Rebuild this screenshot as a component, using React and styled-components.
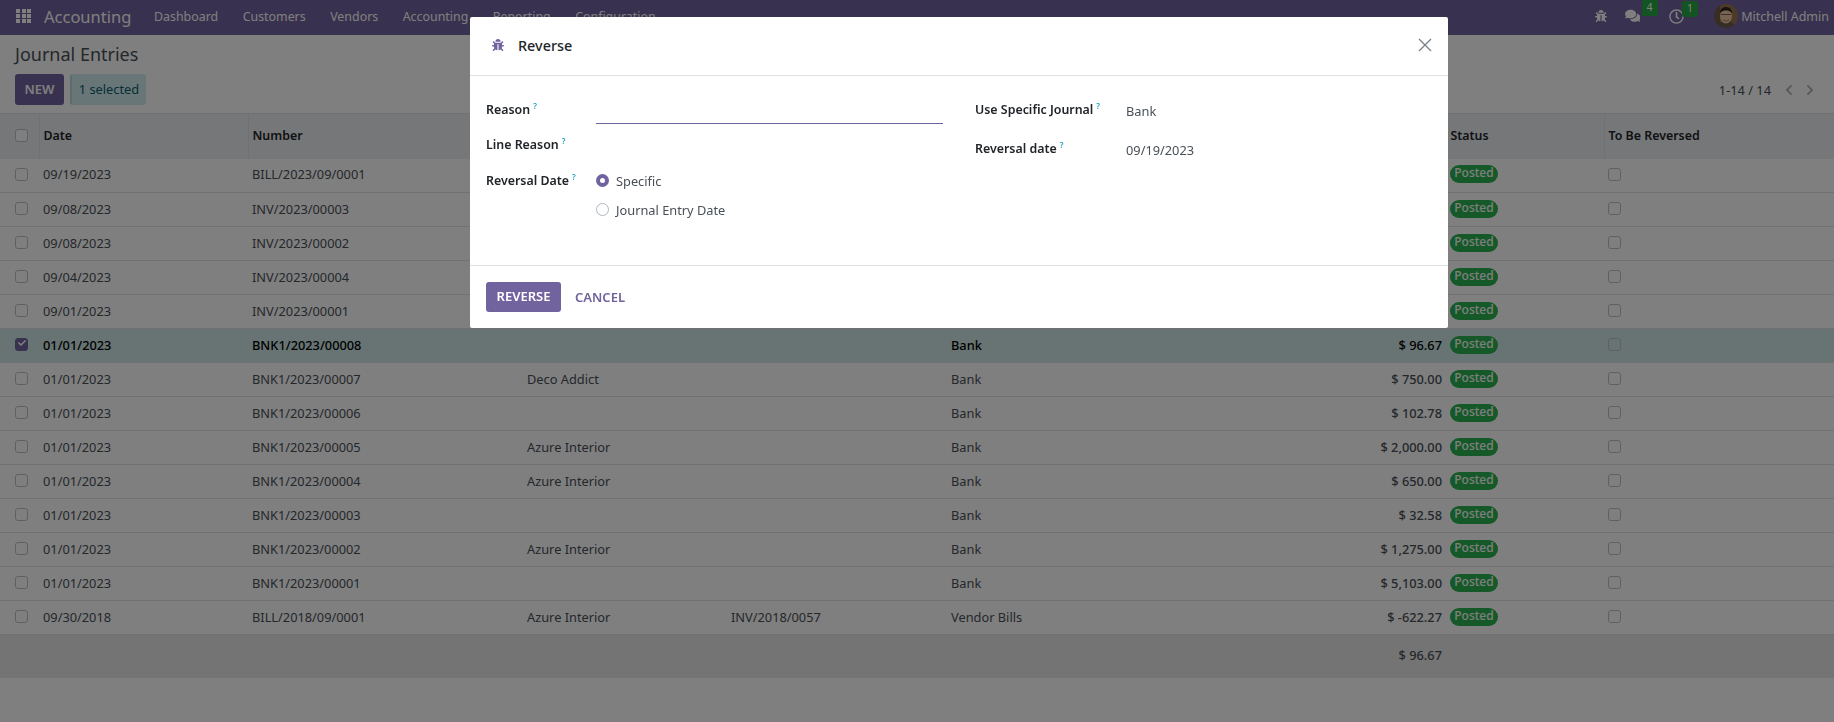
import styled, { createGlobalStyle } from "styled-components";
import { FaBug, FaComments, FaRegClock, FaChevronLeft, FaChevronRight, FaCheck } from "react-icons/fa";

const rows = [
  { date: "09/19/2023", number: "BILL/2023/09/0001", partner: "", ref: "", journal: "Vendor Bills", amount: "$ 1,127.50" },
  { date: "09/08/2023", number: "INV/2023/00003", partner: "", ref: "", journal: "Customer Invoices", amount: "$ 4,610.00" },
  { date: "09/08/2023", number: "INV/2023/00002", partner: "", ref: "", journal: "Customer Invoices", amount: "$ 750.00" },
  { date: "09/04/2023", number: "INV/2023/00004", partner: "", ref: "", journal: "Customer Invoices", amount: "$ 1,740.00" },
  { date: "09/01/2023", number: "INV/2023/00001", partner: "", ref: "", journal: "Customer Invoices", amount: "$ 2,947.50" },
  { date: "01/01/2023", number: "BNK1/2023/00008", partner: "", ref: "", journal: "Bank", amount: "$ 96.67", selected: true },
  { date: "01/01/2023", number: "BNK1/2023/00007", partner: "Deco Addict", ref: "", journal: "Bank", amount: "$ 750.00" },
  { date: "01/01/2023", number: "BNK1/2023/00006", partner: "", ref: "", journal: "Bank", amount: "$ 102.78" },
  { date: "01/01/2023", number: "BNK1/2023/00005", partner: "Azure Interior", ref: "", journal: "Bank", amount: "$ 2,000.00" },
  { date: "01/01/2023", number: "BNK1/2023/00004", partner: "Azure Interior", ref: "", journal: "Bank", amount: "$ 650.00" },
  { date: "01/01/2023", number: "BNK1/2023/00003", partner: "", ref: "", journal: "Bank", amount: "$ 32.58" },
  { date: "01/01/2023", number: "BNK1/2023/00002", partner: "Azure Interior", ref: "", journal: "Bank", amount: "$ 1,275.00" },
  { date: "01/01/2023", number: "BNK1/2023/00001", partner: "", ref: "", journal: "Bank", amount: "$ 5,103.00" },
  { date: "09/30/2018", number: "BILL/2018/09/0001", partner: "Azure Interior", ref: "INV/2018/0057", journal: "Vendor Bills", amount: "$ -622.27" },
];

const navItems = ["Dashboard", "Customers", "Vendors", "Accounting", "Reporting", "Configuration"];

const GlobalStyle = createGlobalStyle`
  html, body {
    margin: 0;
    height: 100%;
    overflow: hidden;
    background: #fff;
  }
  body {
    font-family: "Noto Sans", "Open Sans", sans-serif;
    font-size: 13px;
    color: #495057;
  }
  * {
    box-sizing: border-box;
  }
`;

const Page = styled.div`
  height: 722px;
  display: flex;
  flex-direction: column;
`;

const Navbar = styled.header`
  height: 35px;
  flex: none;
  background: #71639e;
  color: #fff;
  display: flex;
  align-items: center;
  padding: 0 5px 3px 16px;
`;

const AppsGrid = styled.div`
  width: 15px;
  height: 14px;
  display: grid;
  grid-template-columns: repeat(3, 4px);
  grid-template-rows: repeat(3, 4px);
  gap: 1px 1.5px;
  margin-right: 13px;
  span {
    background: #fff;
  }
`;

const Brand = styled.span`
  font-size: 16.5px;
  width: 110px;
`;

const NavItem = styled.span`
  font-size: 12.4px;
  margin-right: 24.5px;
`;

const NavRight = styled.div`
  margin-left: auto;
  display: flex;
  align-items: center;
`;

const NavIcon = styled.span`
  position: relative;
  display: flex;
  margin-left: ${(p) => p.$gap}px;
  font-size: ${(p) => p.$size}px;
`;

const Badge = styled.b`
  position: absolute;
  top: -8px;
  left: ${(p) => p.$left}px;
  width: 16px;
  height: 16px;
  border-radius: 2px;
  background: #28a745;
  color: #fff;
  font-size: 10.5px;
  font-weight: 400;
  line-height: 15px;
  text-align: center;
`;

const UserName = styled.span`
  margin-left: 3px;
  font-size: 12.5px;
`;

const ControlPanel = styled.div`
  flex: none;
  height: 78px;
  border-top: 1px solid transparent;
  padding: 8px 15px 0;
  background: #fff;
`;

const Title = styled.div`
  font-size: 18px;
  line-height: 21px;
  color: #495057;
`;

const ActionRow = styled.div`
  margin-top: 9px;
  display: flex;
  align-items: center;
`;

const NewButton = styled.div`
  width: 49px;
  height: 31px;
  border-radius: 3px;
  background: #71639e;
  color: #fff;
  font-size: 13px;
  font-weight: 600;
  line-height: 31px;
  text-align: center;
`;

const SelectedChip = styled.div`
  width: 76px;
  height: 31px;
  margin-left: 6px;
  border-radius: 3px;
  border-left: 2px solid #b5dce0;
  background: #d1ecf1;
  color: #0c5f6d;
  font-size: 12.8px;
  line-height: 30px;
  text-align: center;
`;

const Pager = styled.div`
  margin-left: auto;
  margin-right: 3px;
  display: flex;
  align-items: center;
  font-size: 12.8px;
  color: #495057;
  svg {
    font-size: 12px;
    color: #adb5bd;
    margin-left: 9px;
  }
  svg:first-of-type {
    margin-left: 12px;
  }
`;

const Table = styled.table`
  width: 100%;
  border-collapse: collapse;
  table-layout: fixed;
  font-size: 12.8px;
`;

const HeadRow = styled.tr`
  height: 45px;
  background: #eceef1;
  border-top: 1px solid #dee2e6;
`;

const HeadCell = styled.th`
  padding: 0 4px 2px;
  font-size: 12.4px;
  text-align: left;
  font-weight: 600;
  color: #212529;
  border-left: ${(p) => (p.$sep ? "1px solid #dee2e6" : "none")};
`;

const Row = styled.tr`
  height: 34px;
  border-bottom: 1px solid #dee2e6;
  background: ${(p) => (p.$selected ? "#cfe8e6" : "#fff")};
  color: ${(p) => (p.$selected ? "#000" : "#495057")};
  font-weight: ${(p) => (p.$selected ? 500 : 400)};
`;

const Cell = styled.td`
  padding: 0 4px 2px;
  text-align: ${(p) => (p.$right ? "right" : "left")};
  font-weight: ${(p) => (p.$right ? 500 : "inherit")};
  white-space: nowrap;
`;

const CheckCell = styled.td`
  padding: 0 0 2px 15px;
`;

const CheckHead = styled.th`
  padding: 0 0 2px 15px;
`;

const Check = styled.span`
  display: block;
  width: 13px;
  height: 13px;
  border-radius: 3px;
  border: 1px solid ${(p) => (p.$checked ? "#71639e" : "#bcc1c7")};
  background: ${(p) => (p.$checked ? "#71639e" : p.$readonly ? "transparent" : "#fff")};
  color: #fff;
  font-size: 8px;
  line-height: 10px;
  text-align: center;
`;

const Posted = styled.span`
  display: block;
  width: 48px;
  height: 18px;
  border-radius: 9px;
  background: #2bb350;
  color: #fff;
  font-size: 12px;
  font-weight: 500;
  line-height: 16px;
  text-align: center;
`;

const FootRow = styled.tr`
  height: 43px;
  background: #e9e9e9;
`;

const Backdrop = styled.div`
  position: fixed;
  inset: 0;
  background: rgba(0, 0, 0, 0.5);
`;

const Modal = styled.div`
  position: fixed;
  top: 17px;
  left: 470px;
  width: 978px;
  height: 311px;
  background: #fff;
  border-radius: 2px;
  display: flex;
  flex-direction: column;
  color: #495057;
`;

const ModalHeader = styled.div`
  height: 59px;
  flex: none;
  border-bottom: 1px solid #dee2e6;
  display: flex;
  align-items: center;
  padding: 0 16px 2px 22px;
`;

const ModalBug = styled(FaBug)`
  font-size: 12px;
  color: #71639e;
`;

const ModalTitle = styled.h4`
  margin: 0 0 0 14px;
  font-size: 14.4px;
  font-weight: 500;
  color: #212529;
`;

const CloseIcon = styled.svg`
  margin-left: auto;
  width: 14px;
  height: 14px;
`;

const ModalBody = styled.div`
  flex: 1;
  display: grid;
  grid-template-columns: 489px 1fr;
  padding: 25px 16px 0;
`;

const FormColumn = styled.div`
  display: flex;
  flex-direction: column;
`;

const Field = styled.div`
  display: flex;
  height: ${(p) => p.$height}px;
`;

const Label = styled.div`
  width: ${(p) => p.$width}px;
  flex: none;
  font-size: 12.4px;
  font-weight: 600;
  line-height: 17px;
  color: #212529;
  sup {
    margin-left: 3px;
    font-size: 8px;
    line-height: 0;
    color: #17a2b8;
  }
`;

const Underline = styled.div`
  width: 347px;
  height: 31px;
  margin-top: -8px;
  border-bottom: 1px solid #71639e;
`;

const RadioGroup = styled.div`
  display: flex;
  flex-direction: column;
  gap: 16px;
  margin-top: 2px;
`;

const RadioRow = styled.div`
  display: flex;
  align-items: center;
  gap: 7px;
  height: 13px;
  font-size: 12.8px;
`;

const Radio = styled.span`
  width: 13px;
  height: 13px;
  border-radius: 50%;
  background: #fff;
  border: ${(p) => (p.$on ? "4px solid #71639e" : "1px solid #adb5bd")};
`;

const Value = styled.div`
  padding-top: 2px;
  line-height: 17px;
  font-size: 12.8px;
`;

const ModalFooter = styled.div`
  height: 63px;
  flex: none;
  border-top: 1px solid #dee2e6;
  display: flex;
  align-items: center;
  padding: 0 16px;
`;

const PrimaryButton = styled.div`
  width: 75px;
  height: 30px;
  border-radius: 3px;
  background: #71639e;
  color: #fff;
  font-size: 13px;
  font-weight: 600;
  line-height: 29px;
  text-align: center;
`;

const LinkButton = styled.div`
  margin-left: 14px;
  margin-top: -1px;
  color: #71639e;
  font-size: 13px;
  font-weight: 600;
`;

function Avatar() {
  return (
    <svg width="24" height="24" viewBox="0 0 24 24" style={{ marginLeft: 30 }}>
      <defs>
        <clipPath id="face-clip">
          <circle cx="12" cy="12" r="12" />
        </clipPath>
      </defs>
      <g clipPath="url(#face-clip)">
        <rect width="24" height="24" fill="#9a7650" />
        <rect x="0" y="0" width="6" height="24" fill="#6f5a49" />
        <path d="M3 24c1-6 5-7 9-7s8 1 9 7z" fill="#6b5a50" />
        <ellipse cx="12" cy="12" rx="6" ry="7.5" fill="#ecc6a4" />
        <path d="M6 9c0-4 3-6 6-6s6 2 6 6c-2-2-4-2.5-6-2.5S8 7 6 9z" fill="#33231c" />
        <path d="M7 10.5h4M13 10.5h4M11 10.5h2" stroke="#2a1d18" strokeWidth="0.6" />
        <path d="M9 16c2 1.2 4 1.2 6 0" stroke="#a0604a" strokeWidth="0.8" fill="none" />
      </g>
    </svg>
  );
}

export default function App() {
  return (
    <>
      <GlobalStyle />
      <Page>
        <Navbar>
          <AppsGrid>
            {Array.from({ length: 9 }, (_, i) => (
              <span key={i} />
            ))}
          </AppsGrid>
          <Brand>Accounting</Brand>
          {navItems.map((item) => (
            <NavItem key={item}>{item}</NavItem>
          ))}
          <NavRight>
            <NavIcon $gap={0} $size={12}>
              <FaBug />
            </NavIcon>
            <NavIcon $gap={18} $size={15.5}>
              <FaComments />
              <Badge $left={17}>4</Badge>
            </NavIcon>
            <NavIcon $gap={29} $size={15}>
              <FaRegClock />
              <Badge $left={13}>1</Badge>
            </NavIcon>
            <Avatar />
            <UserName>Mitchell Admin</UserName>
          </NavRight>
        </Navbar>

        <ControlPanel>
          <Title>Journal Entries</Title>
          <ActionRow>
            <NewButton>NEW</NewButton>
            <SelectedChip>1 selected</SelectedChip>
            <Pager>
              1-14 / 14
              <FaChevronLeft />
              <FaChevronRight />
            </Pager>
          </ActionRow>
        </ControlPanel>

        <Table>
          <colgroup>
            <col width="39" />
            <col width="209" />
            <col width="275" />
            <col width="204" />
            <col width="220" />
            <col width="220" />
            <col width="279" />
            <col width="158" />
            <col />
          </colgroup>
          <thead>
            <HeadRow>
              <CheckHead>
                <Check />
              </CheckHead>
              <HeadCell $sep>Date</HeadCell>
              <HeadCell $sep>Number</HeadCell>
              <HeadCell $sep>Partner</HeadCell>
              <HeadCell $sep>Reference</HeadCell>
              <HeadCell $sep>Journal</HeadCell>
              <HeadCell $sep>Total</HeadCell>
              <HeadCell $sep>Status</HeadCell>
              <HeadCell $sep>To Be Reversed</HeadCell>
            </HeadRow>
          </thead>
          <tbody>
            {rows.map((row) => (
              <Row key={row.number} $selected={row.selected}>
                <CheckCell>
                  <Check $checked={row.selected}>{row.selected && <FaCheck />}</Check>
                </CheckCell>
                <Cell>{row.date}</Cell>
                <Cell>{row.number}</Cell>
                <Cell>{row.partner}</Cell>
                <Cell>{row.ref}</Cell>
                <Cell>{row.journal}</Cell>
                <Cell $right>{row.amount}</Cell>
                <Cell>
                  <Posted>Posted</Posted>
                </Cell>
                <Cell>
                  <Check $readonly />
                </Cell>
              </Row>
            ))}
          </tbody>
          <tfoot>
            <FootRow>
              <td colSpan={6} />
              <Cell $right>$ 96.67</Cell>
              <td colSpan={2} />
            </FootRow>
          </tfoot>
        </Table>
      </Page>

      <Backdrop />

      <Modal>
        <ModalHeader>
          <ModalBug />
          <ModalTitle>Reverse</ModalTitle>
          <CloseIcon viewBox="0 0 14 14">
            <path d="M1 1l12 12M13 1L1 13" stroke="#7a7f85" strokeWidth="1.3" fill="none" />
          </CloseIcon>
        </ModalHeader>
        <ModalBody>
          <FormColumn>
            <Field $height={35}>
              <Label $width={110}>
                Reason<sup>?</sup>
              </Label>
              <Underline />
            </Field>
            <Field $height={36}>
              <Label $width={110}>
                Line Reason<sup>?</sup>
              </Label>
            </Field>
            <Field $height={60}>
              <Label $width={110}>
                Reversal Date<sup>?</sup>
              </Label>
              <RadioGroup>
                <RadioRow>
                  <Radio $on />
                  Specific
                </RadioRow>
                <RadioRow>
                  <Radio />
                  Journal Entry Date
                </RadioRow>
              </RadioGroup>
            </Field>
          </FormColumn>
          <FormColumn>
            <Field $height={39}>
              <Label $width={151}>
                Use Specific Journal<sup>?</sup>
              </Label>
              <Value>Bank</Value>
            </Field>
            <Field $height={39}>
              <Label $width={151}>
                Reversal date<sup>?</sup>
              </Label>
              <Value>09/19/2023</Value>
            </Field>
          </FormColumn>
        </ModalBody>
        <ModalFooter>
          <PrimaryButton>REVERSE</PrimaryButton>
          <LinkButton>CANCEL</LinkButton>
        </ModalFooter>
      </Modal>
    </>
  );
}
